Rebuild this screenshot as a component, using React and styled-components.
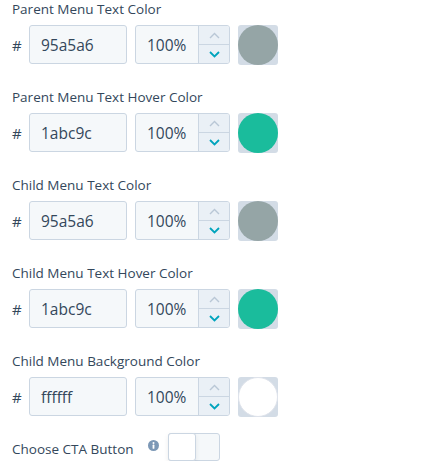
import React from 'react'
import styled, { createGlobalStyle } from 'styled-components'

const Global = createGlobalStyle`
  body{
    margin: 0;
    background: #fff;
    font-family: "Open Sans", "Lato", sans-serif;
    color: #33475b;
  }
`

const items = [
  { label: 'Parent Menu Text Color', hex: '95a5a6', color: '#95a5a6' },
  { label: 'Parent Menu Text Hover Color', hex: '1abc9c', color: '#1abc9c' },
  { label: 'Child Menu Text Color', hex: '95a5a6', color: '#95a5a6' },
  { label: 'Child Menu Text Hover Color', hex: '1abc9c', color: '#1abc9c' },
  { label: 'Child Menu Background Color', hex: 'ffffff', color: '#ffffff' },
]

function ColorField({ label, hex, color }) {
  return (
    <Field>
      <Label>{label}</Label>
      <Row>
        <Hash>#</Hash>
        <HexInput>{hex}</HexInput>
        <Opacity>
          <OpacityValue>100%</OpacityValue>
          <Stepper>
            <StepBtn>
              <svg width="11" height="7" viewBox="0 0 11 7">
                <path d="M1 6 L5.5 1.5 L10 6" fill="none" stroke="#b9c7d6" strokeWidth="1.4" />
              </svg>
            </StepBtn>
            <StepBtn bottom>
              <svg width="11" height="7" viewBox="0 0 11 7">
                <path d="M1 1 L5.5 5.5 L10 1" fill="none" stroke="#00a4bd" strokeWidth="1.8" />
              </svg>
            </StepBtn>
          </Stepper>
        </Opacity>
        <Swatch>
          <Dot color={color} />
        </Swatch>
      </Row>
    </Field>
  )
}

function App() {
  return (
    <>
      <Global />
      <Panel>
        {items.map((it, i) => (
          <ColorField key={i} {...it} />
        ))}
        <ToggleRow>
          <ToggleLabel>Choose CTA Button</ToggleLabel>
          <Info>
            <svg width="11" height="11" viewBox="0 0 11 11">
              <circle cx="5.5" cy="5.5" r="5.5" fill="#7c98b6" />
              <circle cx="5.5" cy="3" r="1" fill="#fff" />
              <rect x="4.6" y="4.6" width="1.8" height="4.2" rx="0.6" fill="#fff" />
            </svg>
          </Info>
          <Toggle>
            <Knob />
          </Toggle>
        </ToggleRow>
      </Panel>
    </>
  )
}

export default App

const Panel = styled.div`
  padding: 0 12px;
  display: flex;
  flex-direction: column;
  gap: 23px;
`

const Field = styled.div`
  display: flex;
  flex-direction: column;
`

const Label = styled.div`
  font-size: 13.5px;
  line-height: 18px;
  margin-bottom: 7px;
  color: #33475b;
`

const Row = styled.div`
  display: flex;
  align-items: center;
  height: 40px;
`

const Hash = styled.div`
  width: 17px;
  font-size: 15px;
`

const HexInput = styled.div`
  box-sizing: border-box;
  width: 98px;
  height: 39px;
  align-self: flex-start;
  background: #f5f8fa;
  border: 1px solid #cbd6e2;
  border-radius: 3px;
  padding: 0 11px;
  display: flex;
  align-items: center;
  font-size: 15.5px;
`

const Opacity = styled.div`
  box-sizing: border-box;
  width: 95px;
  height: 39px;
  align-self: flex-start;
  margin-left: 8px;
  background: #f5f8fa;
  border: 1px solid #cbd6e2;
  border-radius: 3px;
  display: flex;
  overflow: hidden;
`

const OpacityValue = styled.div`
  flex: 1;
  display: flex;
  align-items: center;
  padding-left: 11px;
  font-size: 15.5px;
`

const Stepper = styled.div`
  width: 30px;
  border-left: 1px solid #cbd6e2;
  background: #eaf0f6;
  display: flex;
  flex-direction: column;
`

const StepBtn = styled.div`
  flex: 1;
  display: flex;
  align-items: center;
  justify-content: center;
  border-top: ${p => (p.bottom ? '1px solid #cbd6e2' : 'none')};
`

const Swatch = styled.div`
  width: 40px;
  height: 40px;
  margin-left: 8px;
  background: #d3dce6;
  border-radius: 3px;
  position: relative;
`

const Dot = styled.div`
  position: absolute;
  inset: 0;
  border-radius: 50%;
  background: ${p => p.color};
  box-sizing: border-box;
  border: ${p => (p.color === '#ffffff' ? '1px solid #dfe3eb' : 'none')};
`

const ToggleRow = styled.div`
  display: flex;
  align-items: center;
  margin-top: -7px;
`

const ToggleLabel = styled.div`
  font-size: 13.5px;
  padding-top: 4px;
`

const Info = styled.div`
  display: flex;
  margin-left: 14px;
  margin-top: -4px;
`

const Toggle = styled.div`
  box-sizing: border-box;
  width: 52px;
  height: 28px;
  margin-left: 9px;
  background: #f5f8fa;
  border: 1px solid #cbd6e2;
  border-radius: 3px;
  position: relative;
`

const Knob = styled.div`
  position: absolute;
  left: -1px;
  top: -1px;
  box-sizing: border-box;
  width: 28px;
  height: 28px;
  background: #fff;
  border: 1px solid #cbd6e2;
  border-radius: 3px;
  box-shadow: 0 2px 5px rgba(0, 0, 0, 0.08);
`
